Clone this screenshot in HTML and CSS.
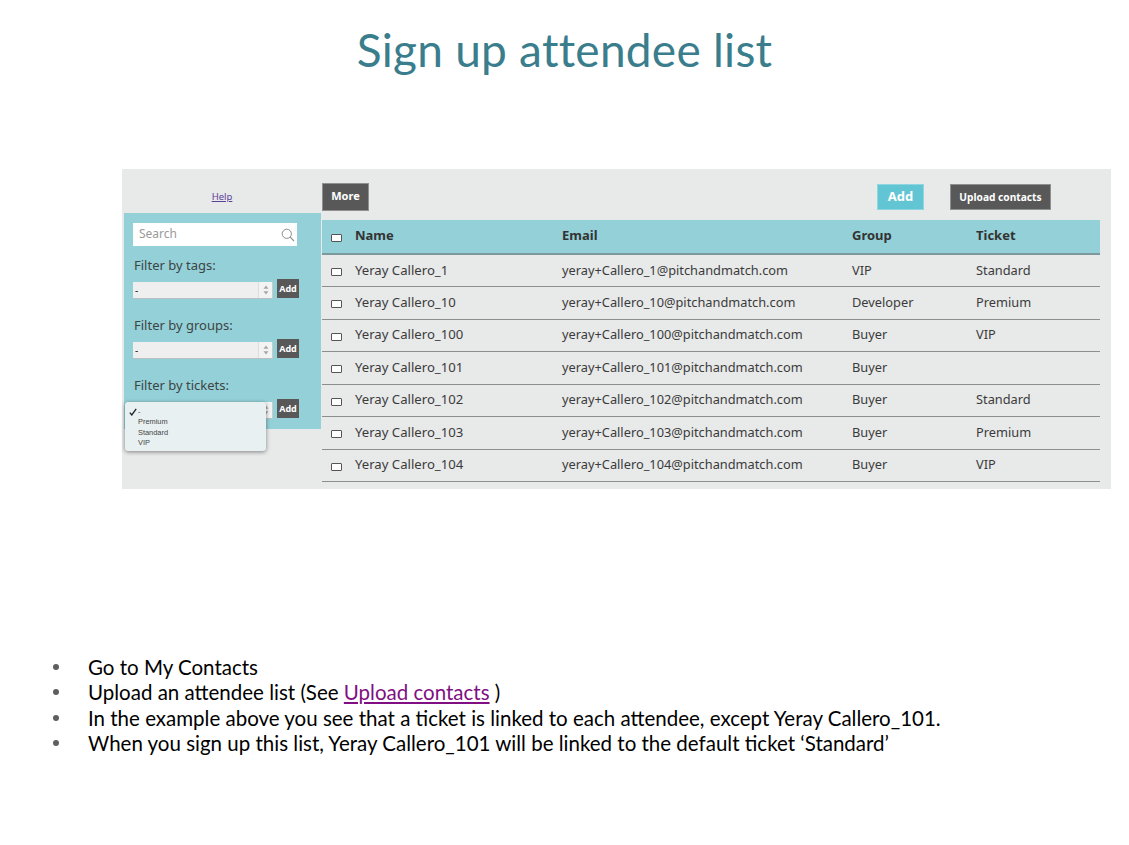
FILE: index.html
```html
<!DOCTYPE html>
<html lang="en">
<head>
<meta charset="utf-8">
<title>Sign up attendee list</title>
<link rel="stylesheet" href="styles.css">
</head>
<body>
<h1 class="title">Sign up attendee list</h1>
<section class="shot">
  <div class="side">
    <div class="help-row"><a class="help" href="#">Help</a></div>
    <div class="filters">
      <div class="search"><span>Search</span>
        <svg class="search-icon" width="14" height="14" viewBox="0 0 14 14"><circle cx="5.8" cy="5.8" r="4.6" fill="none" stroke="#8a8f90" stroke-width="1"/><path d="M9.2 9.2L13 13" stroke="#8a8f90" stroke-width="1.1" fill="none"/></svg>
      </div>
      <div class="filter">
        <label class="filter-label">Filter by tags:</label>
        <div class="filter-row"><div class="select"><span>-</span><i class="stepper"><svg width="6" height="10" viewBox="0 0 6 10"><path d="M3 0.5L5.5 3.8H.5zM3 9.5L.5 6.2h5z" fill="#a4a8a8"/></svg></i></div><button class="add-small">Add</button></div>
      </div>
      <div class="filter">
        <label class="filter-label">Filter by groups:</label>
        <div class="filter-row"><div class="select"><span>-</span><i class="stepper"><svg width="6" height="10" viewBox="0 0 6 10"><path d="M3 0.5L5.5 3.8H.5zM3 9.5L.5 6.2h5z" fill="#a4a8a8"/></svg></i></div><button class="add-small">Add</button></div>
      </div>
      <div class="filter last">
        <label class="filter-label">Filter by tickets:</label>
        <div class="filter-row"><div class="select"><span>-</span><i class="stepper"><svg width="6" height="10" viewBox="0 0 6 10"><path d="M3 0.5L5.5 3.8H.5zM3 9.5L.5 6.2h5z" fill="#a4a8a8"/></svg></i></div><button class="add-small">Add</button></div>
        <div class="menu">
          <div class="menu-item first"><svg class="check" width="8" height="8" viewBox="0 0 8 8"><path d="M.8 4.6L2.8 7 7.2 .8" fill="none" stroke="#222" stroke-width="1.3"/></svg>-</div>
          <div class="menu-item">Premium</div>
          <div class="menu-item">Standard</div>
          <div class="menu-item">VIP</div>
        </div>
      </div>
    </div>
  </div>
  <div class="main">
    <div class="toolbar">
      <button class="btn-dark more">More</button>
      <button class="btn-add">Add</button>
      <button class="btn-dark upload">Upload contacts</button>
    </div>
    <table class="contacts">
      <thead>
        <tr><th class="c-check"><span class="box"></span></th><th class="c-name">Name</th><th class="c-email">Email</th><th class="c-group">Group</th><th>Ticket</th></tr>
      </thead>
      <tbody>
        <tr><td><span class="box"></span></td><td>Yeray Callero_1</td><td>yeray+Callero_1@pitchandmatch.com</td><td>VIP</td><td>Standard</td></tr>
        <tr><td><span class="box"></span></td><td>Yeray Callero_10</td><td>yeray+Callero_10@pitchandmatch.com</td><td>Developer</td><td>Premium</td></tr>
        <tr><td><span class="box"></span></td><td>Yeray Callero_100</td><td>yeray+Callero_100@pitchandmatch.com</td><td>Buyer</td><td>VIP</td></tr>
        <tr><td><span class="box"></span></td><td>Yeray Callero_101</td><td>yeray+Callero_101@pitchandmatch.com</td><td>Buyer</td><td></td></tr>
        <tr><td><span class="box"></span></td><td>Yeray Callero_102</td><td>yeray+Callero_102@pitchandmatch.com</td><td>Buyer</td><td>Standard</td></tr>
        <tr><td><span class="box"></span></td><td>Yeray Callero_103</td><td>yeray+Callero_103@pitchandmatch.com</td><td>Buyer</td><td>Premium</td></tr>
        <tr><td><span class="box"></span></td><td>Yeray Callero_104</td><td>yeray+Callero_104@pitchandmatch.com</td><td>Buyer</td><td>VIP</td></tr>
      </tbody>
    </table>
  </div>
</section>
<ul class="notes">
  <li>Go to My Contacts</li>
  <li>Upload an attendee list (See <a href="#">Upload contacts</a> )</li>
  <li>In the example above you see that a ticket is linked to each attendee, except Yeray Callero_101.</li>
  <li>When you sign up this list, Yeray Callero_101 will be linked to the default ticket ‘Standard’</li>
</ul>
</body>
</html>
```
FILE: styles.css
```css
* { box-sizing: border-box; }
html, body { margin: 0; padding: 0; background: #fff; }
body { width: 1129px; height: 845px; overflow: hidden; font-family: "Lato", "Open Sans", sans-serif; }

.title {
  margin: 0; padding-top: 21px; height: 169px;
  text-align: center; font-weight: 400; font-size: 46px; letter-spacing: .26px; line-height: 58px;
  color: #3a7d8c; font-family: "Lato", sans-serif;
}

.shot {
  margin-left: 122px; width: 989px; height: 320px;
  background: #e8e9e9; display: flex;
  font-family: "Noto Sans", sans-serif; color: #3b3b3b;
}
.side { width: 200px; flex: none; }
.help-row { height: 44px; padding-top: 20px; text-align: center; font-size: 9.5px; line-height: 16px; }
.help { color: #5b3f9a; }
.filters {
  margin-left: 2px; width: 197px; height: 216px;
  background: #94d0d7; padding: 10px 0 0 9px;
}
.search {
  width: 164px; height: 23px; background: #fff; display: flex; align-items: center;
  justify-content: space-between; padding: 0 2px 2px 6px; color: #9a9a9a; font-size: 12px;
}
.search-icon { flex: none; margin-top: 2px; }
.filter { margin-top: 10px; height: 50px; position: relative; }
.filter-label { display: block; margin-left: 1px; font-size: 13px; line-height: 18px; color: #3d4445; }
.filter-row { display: flex; align-items: center; margin-top: 7.5px; }
.select {
  width: 140px; height: 17px; display: flex; align-items: center; justify-content: space-between;
  background: #efefef; border-bottom: 1px solid #b9c0c0; border-right: 1px solid #c6cccc;
  font-size: 10px; color: #222; padding-left: 2px;
}
.stepper { width: 14px; height: 16px; border-left: 1px solid #dcdcdc; display: flex; align-items: center; justify-content: center; background: #f3f3f3; }
.add-small {
  width: 22px; height: 19px; margin-left: 4px; margin-top: -3px; padding: 0; border: 0; background: #585858; color: #fff;
  font: 700 9px/18px "Noto Sans", sans-serif;
}
.menu {
  position: absolute; left: -8px; top: 26px; width: 141px; height: 49px; z-index: 2;
  background: #e8f0f1; border-radius: 3px; box-shadow: 0 1px 4px rgba(0,0,0,.45);
  padding-top: 5px; font-family: "Liberation Sans", sans-serif; font-size: 7.4px; color: #444;
}
.menu-item { padding-left: 13px; height: 10.3px; line-height: 10.3px; position: relative; }
.check { position: absolute; left: 4px; top: 1px; }

.main { flex: none; width: 778px; }
.toolbar { height: 51px; padding-top: 14px; display: flex; align-items: flex-start; }
.btn-dark {
  background: #585858; color: #fff; border: 1px solid #8f9191; padding: 0 0 3px;
  font-family: "Noto Sans", sans-serif; font-weight: 700; text-align: center;
}
.more { width: 47px; height: 28px; font-size: 11px; }
.btn-add {
  width: 47px; height: 26px; margin-left: 508px; background: #62c5d4; color: #fff; border: 1px solid #8fd6e0; padding: 0 0 3px;
  font: 700 13px "Noto Sans", sans-serif; margin-top: 1px;
}
.upload { width: 101px; height: 26px; margin-left: 26px; font-size: 10.2px; margin-top: 1px; padding-bottom: 1px; }

.contacts { width: 778px; border-collapse: collapse; table-layout: fixed; font-size: 12.8px; }
.contacts th {
  background: #94d0d7; height: 34px; text-align: left; font-weight: 700; font-size: 13px; color: #333;
  padding: 0 0 3px; border-bottom: 2px solid #7c9a9e;
}
.contacts td { height: 32.5px; padding: 0 0 2px; border-bottom: 1px solid #8d8f8f; color: #3b3b3b; }
.contacts td:nth-child(2) { font-size: 13.15px; }
.c-check { width: 33px; }
.c-name { width: 207px; }
.c-email { width: 290px; }
.c-group { width: 124px; }
.box {
  display: block; width: 11px; height: 8px; margin: 5px 0 0 9px; background: #fff;
  border: 1px solid #555; border-radius: 1px;
}

.notes {
  list-style: none; margin: 166px 0 0 88px; padding: 0;
  font-family: "Lato", sans-serif; font-size: 20.5px; line-height: 25.3px; color: #000;
}
.notes li { position: relative; }
.notes li::before {
  content: ""; position: absolute; left: -35px; top: 9px; width: 6px; height: 6px; border-radius: 50%; background: #5f5f5f;
}
.notes a { color: #7f0f83; }
```
